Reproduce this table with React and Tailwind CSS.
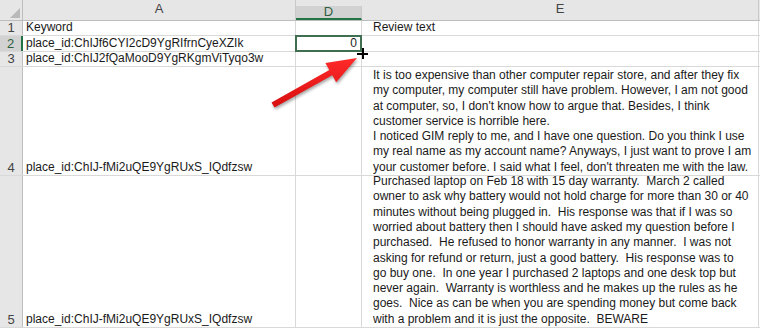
import React from "react";

const font = { fontFamily: '"Liberation Sans", Arial, sans-serif' };

const row4Lines = [
  "It is too expensive than other computer repair store, and after they fix",
  "my computer, my computer still have problem. However, I am not good",
  "at computer, so, I don't know how to argue that. Besides, I think",
  "customer service is horrible here.",
  "I noticed GIM reply to me, and I have one question. Do you think I use",
  "my real name as my account name? Anyways, I just want to prove I am",
  "your customer before. I said what I feel, don't threaten me with the law.",
];

const row5Lines = [
  "Purchased laptop on Feb 18 with 15 day warranty.  March 2 called",
  "owner to ask why battery would not hold charge for more than 30 or 40",
  "minutes without being plugged in.  His response was that if I was so",
  "worried about battery then I should have asked my question before I",
  "purchased.  He refused to honor warranty in any manner.  I was not",
  "asking for refund or return, just a good battery.  His response was to",
  "go buy one.  In one year I purchased 2 laptops and one desk top but",
  "never again.  Warranty is worthless and he makes up the rules as he",
  "goes.  Nice as can be when you are spending money but come back",
  "with a problem and it is just the opposite.  BEWARE",
];

const rows = [
  { n: "1", h: "h-[15px]", a: "Keyword", e: ["Review text"] },
  { n: "2", h: "h-[16px]", a: "place_id:ChIJf6CYI2cD9YgRIfrnCyeXZIk", e: [], sel: true },
  { n: "3", h: "h-[15px]", a: "place_id:ChIJ2fQaMooD9YgRKgmViTyqo3w", e: [] },
  { n: "4", h: "h-[109px]", a: "place_id:ChIJ-fMi2uQE9YgRUxS_IQdfzsw", e: row4Lines },
  { n: "5", h: "h-[152px]", a: "place_id:ChIJ-fMi2uQE9YgRUxS_IQdfzsw", e: row5Lines },
];

const Arrow = () => (
  <svg
    className="absolute left-[265px] top-[52px] pointer-events-none"
    width="100"
    height="60"
    viewBox="0 0 100 60"
    style={{ filter: "drop-shadow(1px 2px 1.5px rgba(0,0,0,0.35))" }}
  >
    <defs>
      <linearGradient id="ar" x1="0" y1="0" x2="0" y2="1">
        <stop offset="0" stopColor="#ff2a2a" />
        <stop offset="1" stopColor="#d80f0f" />
      </linearGradient>
    </defs>
    <polygon
      points="6.5,50.4 64.3,18.1 60.4,11.1 92,6 71.2,30.3 67.3,23.3 9.5,55.6"
      fill="url(#ar)"
    />
  </svg>
);

export default function App() {
  return (
    <div className="relative w-[760px] h-[329px] overflow-hidden bg-white text-[12px] text-[#1a1a1a]" style={font}>
      {/* column headers */}
      <div className="flex h-[21px] bg-[#e6e6e6] border-b border-[#bdbdbd]">
        <div className="relative shrink-0 w-[23px] border-r border-[#bdbdbd]">
          <div
            className="absolute right-[2px] bottom-[2px] w-[10px] h-[10px] bg-[#b9b9b9]"
            style={{ clipPath: "polygon(100% 0, 100% 100%, 0 100%)" }}
          />
        </div>
        <div className="shrink-0 w-[273px] flex items-end justify-center pb-[2px] text-[13px] border-r border-[#c9c9c9] text-[#444]">A</div>
        <div className="shrink-0 w-[66px] mt-[6px] flex items-center justify-center text-[13px] bg-[#d2d2d2] border-b-2 border-[#217346] border-r border-r-[#c9c9c9] text-[#2f5e3f]">D</div>
        <div className="flex-1 min-w-0 flex items-end justify-center pb-[2px] text-[13px] border-r border-[#c9c9c9] text-[#444] mr-[1px]">E</div>
      </div>

      {rows.map((r) => (
        <div key={r.n} className={`flex ${r.h} border-b border-[#d9d9d9]`}>
          <div
            className={`shrink-0 w-[23px] flex items-end justify-center leading-[15px] text-[13px] ${
              r.sel ? "bg-[#d2d2d2] border-r-2 border-[#217346] text-[#2f5e3f]" : "bg-[#e6e6e6] border-r border-[#bdbdbd] text-[#444]"
            }`}
          >
            {r.n}
          </div>
          <div className="shrink-0 w-[273px] flex items-end pl-[3px] leading-[15px] whitespace-nowrap border-r border-[#d9d9d9]">
            {r.a}
          </div>
          <div className="relative shrink-0 w-[66px] border-r border-[#d9d9d9]">
            {r.sel && (
              <div className="absolute -left-[1px] -top-[1px] w-[67px] h-[17px] border-2 border-[#3f6f50] flex items-end justify-end pr-[3px] leading-[14px]">
                0
              </div>
            )}
          </div>
          <div className="flex-1 min-w-0 flex flex-col justify-end pl-[11px] leading-[15.3px] whitespace-pre border-r border-[#d9d9d9] mr-[1px]">
            {r.e.map((l, i) => (
              <div key={i}>{l}</div>
            ))}
          </div>
        </div>
      ))}

      {/* fill handle cursor */}
      <div className="absolute left-[357px] top-[48px] w-[11px] h-[11px] pointer-events-none">
        <div className="absolute left-[5px] top-0 w-[2px] h-[11px] bg-black" />
        <div className="absolute left-0 top-[5px] w-[11px] h-[2px] bg-black" />
      </div>

      <Arrow />
    </div>
  );
}
